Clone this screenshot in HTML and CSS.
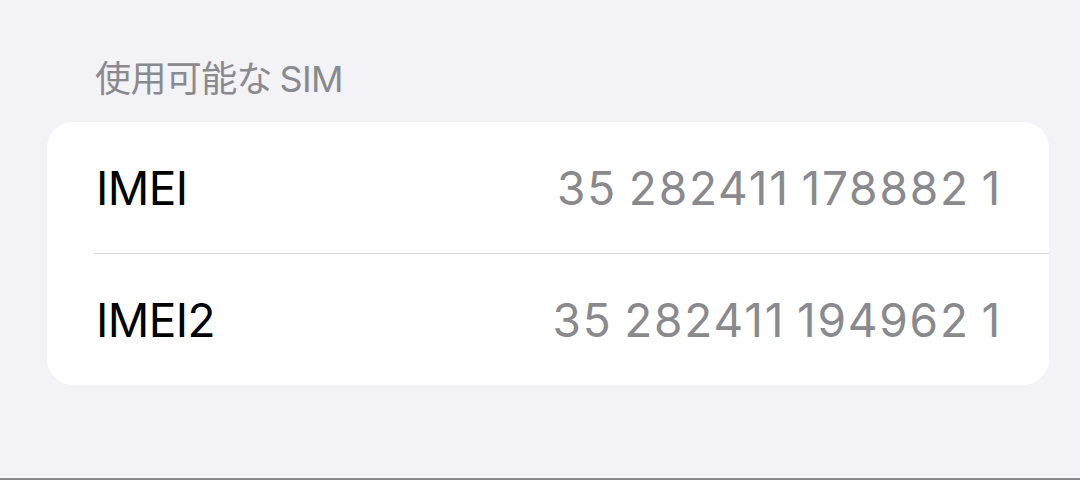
FILE: index.html
```html
<!DOCTYPE html>
<html lang="ja">
<head>
<meta charset="utf-8">
<title>使用可能な SIM</title>
<link rel="stylesheet" href="styles.css">
</head>
<body>
<main class="settings">
  <h2 class="section-header">使用可能な SIM</h2>
  <section class="group">
    <div class="row">
      <span class="label">IMEI</span>
      <span class="value">35 282411 178882 1</span>
    </div>
    <div class="row">
      <span class="label">IMEI2</span>
      <span class="value">35 282411 194962 1</span>
    </div>
  </section>
</main>
<div class="home-edge"></div>
</body>
</html>
```

FILE: styles.css
```css
html, body {
  margin: 0;
  padding: 0;
  height: 100%;
}

body {
  background: #f2f2f7;
  font-family: Inter, "Noto Sans CJK JP", "Liberation Sans", sans-serif;
  display: flex;
  flex-direction: column;
  overflow: hidden;
}

.settings {
  flex: 1;
  padding: 0 31px 0 47px;
}

.section-header {
  margin: 58px 0 0 48px;
  font-size: 36px;
  line-height: 42px;
  font-weight: 400;
  color: #8a8a8e;
  letter-spacing: -0.6px;
  word-spacing: -2px;
}

.group {
  margin-top: 22px;
  background: #ffffff;
  border-radius: 26px;
  padding-left: 47px;
}

.row {
  height: 131px;
  display: flex;
  align-items: center;
  justify-content: space-between;
  padding: 0 47px 0 2px;
}

.row + .row {
  border-top: 1px solid #d6d6da;
}

.label {
  font-size: 46px;
  color: #000000;
  letter-spacing: -0.6px;
}

.value {
  font-size: 46px;
  color: #8a8a8e;
  letter-spacing: 1.8px;
  word-spacing: -3px;
}

.home-edge {
  height: 2px;
  border-top: 2px solid #fafafc;
  box-shadow: 0 -1px 0 #f2f2f7;
  background: #8a8a8e;
}
```
